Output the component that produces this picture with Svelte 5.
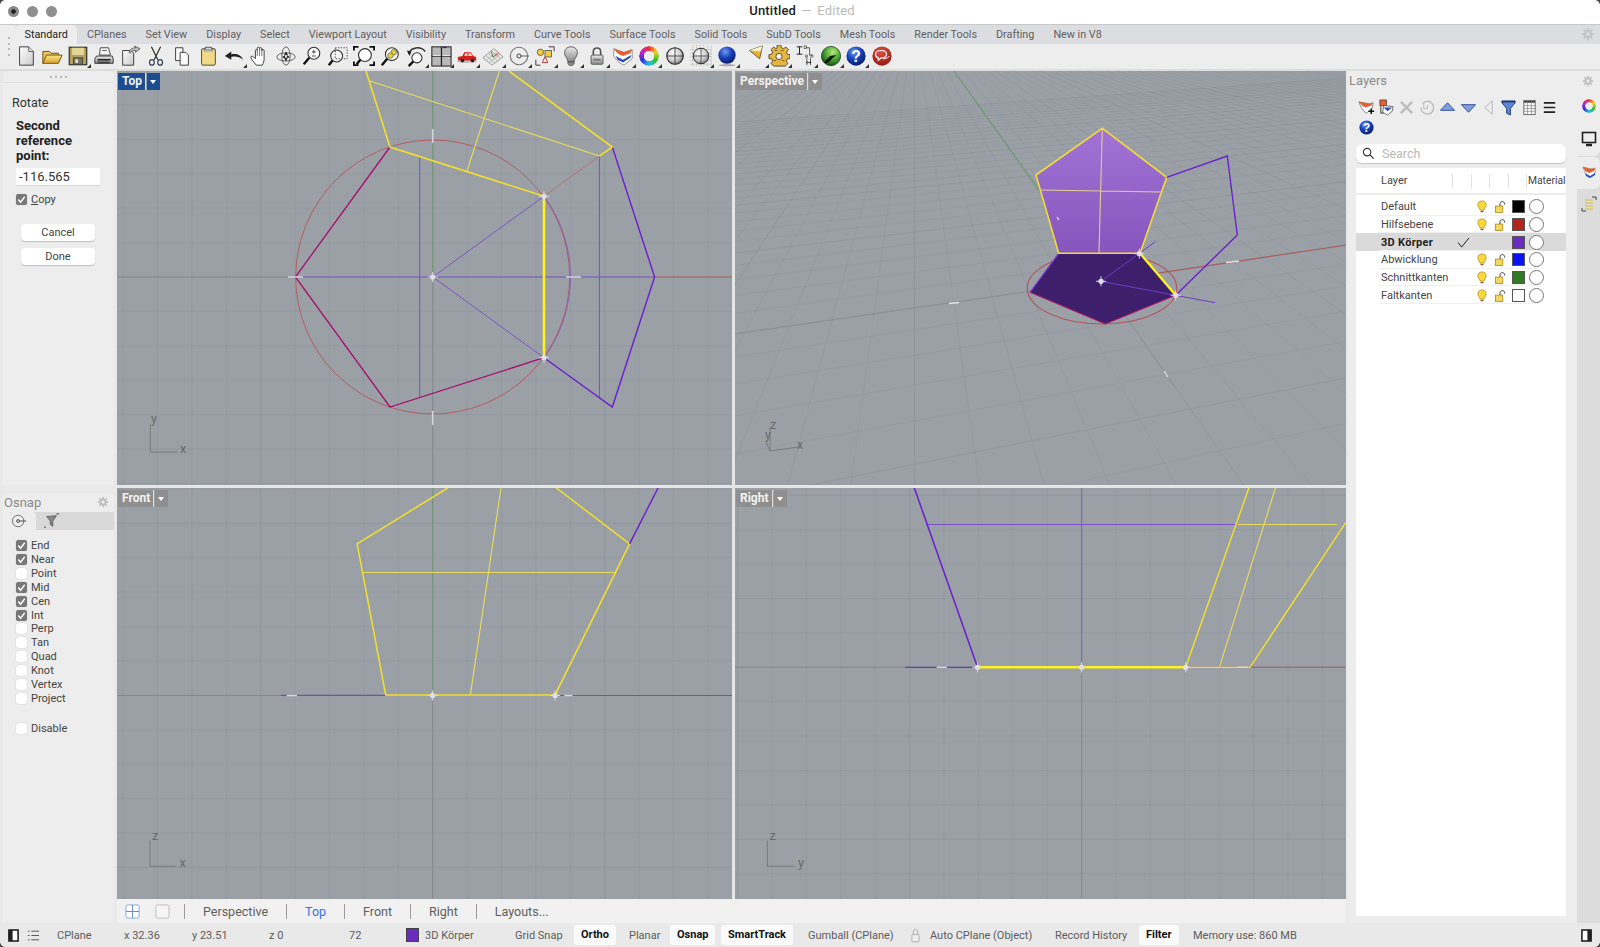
<script>
  const tabs = ['Standard','CPlanes','Set View','Display','Select','Viewport Layout','Visibility','Transform','Curve Tools','Surface Tools','Solid Tools','SubD Tools','Mesh Tools','Render Tools','Drafting','New in V8'];

  const osnaps = [
    ['End', true], ['Near', true], ['Point', false], ['Mid', true], ['Cen', true], ['Int', true],
    ['Perp', false], ['Tan', false], ['Quad', false], ['Knot', false], ['Vertex', false], ['Project', false]
  ];

  const layers = [
    { name: 'Default', color: '#000000' },
    { name: 'Hilfsebene', color: '#b3241c' },
    { name: '3D Körper', color: '#6a2bc0', current: true },
    { name: 'Abwicklung', color: '#0a14f0' },
    { name: 'Schnittkanten', color: '#2f7a22' },
    { name: 'Faltkanten', color: '#ffffff' }
  ];

  const status = [
    { t: 'CPlane', w: 67 }, { t: 'x 32.36', w: 68 }, { t: 'y 23.51', w: 77 }, { t: 'z 0', w: 80 },
    { t: '72', w: 57 }, { t: '3D Körper', w: 109, swatch: true }, { t: 'Grid Snap', w: 59 },
    { t: 'Ortho', w: 55, on: true }, { t: 'Planar', w: 41 }, { t: 'Osnap', w: 51, on: true },
    { t: 'SmartTrack', w: 87, on: true }, { t: 'Gumball (CPlane)', w: 103 }, { t: '', w: 19, lock: true },
    { t: 'Auto CPlane (Object)', w: 125 }, { t: 'Record History', w: 84 }, { t: 'Filter', w: 54, on: true },
    { t: 'Memory use: 860 MB', w: 140 }
  ];

  // flat construction grid around the world origin of a view
  function flatGrid(cx, cy, w, h, step, every) {
    let minor = '';
    let major = '';
    for (let i = -30; i <= 30; i++) {
      const x = cx + i * step;
      const y = cy + i * step;
      const big = i % every === 0;
      if (x >= 0 && x <= w) {
        if (big) major += `M${x} 0V${h}`;
        else minor += `M${x} 0V${h}`;
      }
      if (y >= 0 && y <= h) {
        if (big) major += `M0 ${y}H${w}`;
        else minor += `M0 ${y}H${w}`;
      }
    }
    return { minor, major };
  }

  // ground plane seen through the perspective camera
  function project(X, Y) {
    const q = 1 + 0.01344 * X + 0.0648 * Y;
    return [(366 + (34.8 * X - 12.1 * Y) / q).toFixed(1), (210 + (-5 * X - 17.3 * Y) / q).toFixed(1)];
  }

  function perspGrid() {
    let minor = '';
    let major = '';
    const add = (a, b, big) => {
      const s = `M${a[0]} ${a[1]}L${b[0]} ${b[1]}`;
      if (big) major += s;
      else minor += s;
    };
    for (let X = -60; X <= 60; X++) {
      const y0 = Math.max((0.12 - 1 - 0.01344 * X) / 0.0648, -40);
      add(project(X, y0), project(X, 120), X % 5 === 0);
    }
    for (let Y = -13; Y <= 30; Y++) {
      const x0 = Math.max((0.12 - 1 - 0.0648 * Y) / 0.01344, -70);
      add(project(x0, Y), project(300, Y), Y % 5 === 0);
    }
    return { minor, major };
  }

  const gridTop = flatGrid(315.7, 206, 615, 414, 34.4, 5);
  const gridFront = flatGrid(315.7, 207.4, 615, 411, 34.4, 5);
  const gridRight = flatGrid(346.6, 179.3, 611, 411, 34.4, 5);
  const gridPersp = perspGrid();
</script>

<svg class="defs" width="0" height="0" aria-hidden="true">
  <defs>
    <linearGradient id="paper" x1="0" y1="0" x2="1" y2="1"><stop offset="0" stop-color="#fff"/><stop offset="1" stop-color="#c9c9c9"/></linearGradient>
    <linearGradient id="yel" x1="0" y1="0" x2="0" y2="1"><stop offset="0" stop-color="#fbe58a"/><stop offset="1" stop-color="#d9a32c"/></linearGradient>
    <linearGradient id="steel" x1="0" y1="0" x2="0" y2="1"><stop offset="0" stop-color="#e8e8e8"/><stop offset="1" stop-color="#8a8a8a"/></linearGradient>
    <radialGradient id="ball" cx=".4" cy=".35" r=".7"><stop offset="0" stop-color="#fff"/><stop offset=".6" stop-color="#ccc"/><stop offset="1" stop-color="#777"/></radialGradient>
    <radialGradient id="blueball" cx=".4" cy=".3" r=".75"><stop offset="0" stop-color="#6f9cf0"/><stop offset=".5" stop-color="#1740b8"/><stop offset="1" stop-color="#071a60"/></radialGradient>
    <radialGradient id="greenball" cx=".6" cy=".3" r=".8"><stop offset="0" stop-color="#b9ea7a"/><stop offset=".55" stop-color="#3f9a2a"/><stop offset="1" stop-color="#0c3a12"/></radialGradient>
    <radialGradient id="redball" cx=".45" cy=".3" r=".8"><stop offset="0" stop-color="#e25040"/><stop offset="1" stop-color="#8a120c"/></radialGradient>
    <linearGradient id="facefill" x1="0" y1="0" x2="0" y2="1"><stop offset="0" stop-color="#a274d6"/><stop offset="1" stop-color="#8655bd"/></linearGradient>
    <g id="hnd">
      <path d="M-5 0H5M0 -5V5" stroke="#d8dade" stroke-width="1"/>
      <circle r="2.600" fill="#dfe0e4"/>
    </g>
  </defs>
</svg>

<div class="window">
  <header class="titlebar">
    <div class="lights">
      <span class="light first"></span><span class="light"></span><span class="light"></span>
    </div>
    <div class="doc"><b>Untitled</b> <i>— Edited</i></div>
  </header>

  <nav class="tabrow">
    {#each tabs as tab, i}
      <span class="tab" class:active={i === 0}>{tab}</span>
    {/each}
    <svg class="tab-gear" viewBox="0 0 16 16"><circle cx="8" cy="8" r="3.4" fill="none" stroke="#c4c4c4" stroke-width="2.4"/><path d="M8 1v3M8 12v3M1 8h3M12 8h3M3 3l2 2M11 11l2 2M13 3l-2 2M5 11l-2 2" stroke="#c4c4c4" stroke-width="2"/></svg>
  </nav>

  <div class="toolbar">
    <span class="grabber"><i></i><i></i><i></i><i></i></span>

    <span class="tb"><svg viewBox="0 0 24 24"><path d="M5 2h10l5 5v15H5z" fill="url(#paper)" stroke="#333"/><path d="M15 2v5h5" fill="#eee" stroke="#555"/></svg></span>
    <span class="tb"><svg viewBox="0 0 24 24"><path d="M2 20V7h7l2 2h8v3" fill="#e8c25a" stroke="#6b4b0a"/><path d="M2 20l4-9h17l-4 9z" fill="url(#yel)" stroke="#6b4b0a"/></svg></span>
    <span class="tb fly"><svg viewBox="0 0 24 24"><rect x="2.5" y="2.5" width="19" height="19" fill="#b3a05c" stroke="#3a3a30" stroke-width="1.4"/><rect x="5.5" y="3" width="13" height="8" fill="#e3d596"/><rect x="7" y="14" width="10" height="7" fill="#77775f" stroke="#444"/><rect x="9" y="15.5" width="3" height="4" fill="#ddd"/></svg></span>
    <span class="tb"><svg viewBox="0 0 24 24"><path d="M8 3h9l2 8H7z" fill="#f4f4f4" stroke="#444"/><path d="M4 12h17l1 3v5H2v-5z" fill="url(#steel)" stroke="#333"/><path d="M5 16h14" stroke="#222" stroke-width="1.6"/><rect x="5" y="18" width="13" height="2" fill="#444"/><path d="M10 6h5" stroke="#555"/></svg></span>
    <span class="tb"><svg viewBox="0 0 24 24"><path d="M4 6h9l3 3v13H4z" fill="url(#paper)" stroke="#333"/><path d="M11 8c1-4 4-5 7-5l-1-2 6 3-5 4 0-2c-3 0-5 1-6 3z" fill="#bbb" stroke="#333" stroke-width=".7"/></svg></span>
    <span class="tb"><svg viewBox="0 0 24 24" fill="none"><path d="M7 2l7 14M17 2l-7 14" stroke="#333" stroke-width="1.4"/><ellipse cx="7.5" cy="19" rx="2.6" ry="3" stroke="#345" stroke-width="1.3"/><ellipse cx="16.5" cy="19" rx="2.6" ry="3" stroke="#345" stroke-width="1.3"/></svg></span>
    <span class="tb"><svg viewBox="0 0 24 24"><path d="M5 3h8v14H5z" fill="#fafafa" stroke="#333"/><path d="M10 8h6l3 3v11h-9z" fill="#fafafa" stroke="#333"/></svg></span>
    <span class="tb"><svg viewBox="0 0 24 24"><rect x="5" y="4" width="15" height="18" rx="1.5" fill="#f1d987" stroke="#443"/><path d="M9 5V2.5h7V5z" fill="#fff" stroke="#444"/><path d="M8 4.5h9v2H8z" fill="#ddd" stroke="#555" stroke-width=".6"/></svg></span>
    <span class="tb fly"><svg viewBox="0 0 24 24"><path d="M2 12l7-5v3c6-1 11 1 13 6-4-3-8-4-13-3v3z" fill="#222"/></svg></span>
    <span class="tb"><svg viewBox="0 0 24 24"><path d="M8 22c-2-3-6-6-6-9 0-1 2-1 3 0l2 2V6c0-1.500 2-1.500 2 0V3.500c0-1.500 2.500-1.500 2.500 0V4c0-1.500 2.500-1.500 2.500 0v2c0-1.300 2.500-1.300 2.500 0v9c0 3-1 5-2 7z" fill="#fff" stroke="#333"/><path d="M9 6v6M11.500 4v8M14 4v8" stroke="#333" stroke-width=".7"/></svg></span>
    <span class="tb"><svg viewBox="0 0 24 24" fill="none"><ellipse cx="12" cy="13" rx="10" ry="4.500" stroke="#555"/><ellipse cx="12" cy="12" rx="4.500" ry="10" stroke="#555"/><path d="M12 7l2 4h-4zM12 18l-2-4h4zM8 13l3-2v4zM16 13l-3-2v4z" fill="#222"/></svg></span>
    <span class="tb"><svg viewBox="0 0 24 24" fill="none"><circle cx="14" cy="9" r="6.500" fill="#fff" stroke="#333" stroke-width="1.200"/><path d="M9 14l-6 7" stroke="#111" stroke-width="2.600"/><path d="M14 5.500v4M12 7.500h4M12 12h4" stroke="#333"/></svg></span>
    <span class="tb"><svg viewBox="0 0 24 24" fill="none"><circle cx="10.500" cy="12" r="6.500" fill="#f4f4f4" stroke="#333" stroke-width="1.200"/><path d="M6 17l-4 5" stroke="#111" stroke-width="2.600"/><rect x="9" y="3" width="13" height="12" stroke="#444" stroke-dasharray="1.500 1.500"/></svg></span>
    <span class="tb"><svg viewBox="0 0 24 24" fill="none"><circle cx="13" cy="11" r="7" fill="#fff" stroke="#333" stroke-width="1.200"/><path d="M8 16l-4 5" stroke="#111" stroke-width="2.600"/><path d="M1 6V2h5M18 2h5v4M1 18v4h5M23 18v4h-5" stroke="#111" stroke-width="2"/></svg></span>
    <span class="tb"><svg viewBox="0 0 24 24" fill="none"><circle cx="14" cy="10" r="7" fill="#fff" stroke="#333" stroke-width="1.200"/><circle cx="16" cy="8" r="3" fill="#e8cf30" stroke="#776"/><circle cx="12.500" cy="11.500" r="3" fill="#e8cf30" stroke="#776"/><path d="M9 15l-6 7" stroke="#111" stroke-width="2.600"/></svg></span>
    <span class="tb fly"><svg viewBox="0 0 24 24" fill="none"><circle cx="13" cy="14" r="5.500" fill="#fff" stroke="#333" stroke-width="1.200"/><path d="M9 18l-5 5" stroke="#111" stroke-width="2.600"/><path d="M4 10c2-8 13-9 18-3" stroke="#333" stroke-width="1.600"/><path d="M2 6l5 1-2 5z" fill="#222"/></svg></span>
    <span class="tb fly"><svg viewBox="0 0 24 24"><rect x="2" y="2" width="21" height="21" fill="#b8b8b8" stroke="#333" stroke-width="1.200"/><path d="M12.500 2v21M2 12.500h21" stroke="#222" stroke-width="1.400"/><path d="M3 11h8.500v1.200H3zM13.500 11H22v1.200h-8.500z" fill="#e6e6e6"/><path d="M14 2h4v1.400h-4z" fill="#1a2bb0"/></svg></span>
    <span class="tb fly"><svg viewBox="0 0 24 24"><ellipse cx="12" cy="18" rx="11" ry="1.500" fill="#bbb"/><path d="M2 17v-4l5-1 2-4h7l3 4 3 1v4z" fill="#d3201c"/><path d="M10 9h2.500v3H9zM13.500 9H16l2 3h-4.500z" fill="#f7d4c8"/><circle cx="7" cy="17" r="2" fill="#222"/><circle cx="18" cy="17" r="2" fill="#222"/></svg></span>
    <span class="tb fly"><svg viewBox="0 0 24 24"><path d="M1 14l12-10 10 9-12 9z" fill="#e6e6e6" stroke="#777" stroke-width=".7"/><path d="M4 11.500l10 8M7 9l10 8M10 6.500l10 8M5 16.500l12-9.500M8 19l12-9.500" stroke="#888" stroke-width=".5"/><path d="M12 13l6-4" stroke="#c02020"/><path d="M12 13l-2-6" stroke="#2a9a2a"/></svg></span>
    <span class="tb fly"><svg viewBox="0 0 24 24" fill="none"><circle cx="12" cy="12" r="9.500" stroke="#777" stroke-width="1.200"/><circle cx="12" cy="12" r="2.200" stroke="#333"/><path d="M14 12h9" stroke="#555"/></svg></span>
    <span class="tb fly"><svg viewBox="0 0 24 24"><circle cx="7" cy="8" r="3.500" fill="#f2cc3a" stroke="#665"/><rect x="12" y="6" width="7" height="7" fill="#f2cc3a" stroke="#665"/><path d="M9 19l3-6 3 6z" fill="#fff" stroke="#c02020"/><path d="M16 2h6v5M2 16v6h5" fill="none" stroke="#333"/></svg></span>
    <span class="tb fly"><svg viewBox="0 0 24 24"><path d="M12 2c5 0 7 3.500 7 6.500 0 4-3.500 6-3.500 9.500h-7C8.500 14.500 5 12.500 5 8.500 5 5.500 7 2 12 2z" fill="url(#steel)" stroke="#555"/><path d="M8.500 18.500h7v2l-2 2h-3l-2-2z" fill="#888" stroke="#444" stroke-width=".6"/></svg></span>
    <span class="tb fly"><svg viewBox="0 0 24 24"><path d="M8 11V7c0-5 8-5 8 0v4" fill="none" stroke="#555" stroke-width="1.800"/><rect x="5.500" y="11" width="13" height="10" rx="1" fill="url(#steel)" stroke="#555"/><path d="M8 15h8v2H8z" fill="#777"/></svg></span>
    <span class="tb fly"><svg viewBox="0 0 24 24"><path d="M2 4l11 4 9-3v10l-9 7c-5-2-9-6-11-10z" fill="#fff" stroke="#444" stroke-width=".6"/><path d="M2 4l11 4 9-3-2 4-8 3c-4-1-8-4-10-8z" fill="#e86030"/><path d="M4 12l8 4 9-5-1 3-8 5-6-3z" fill="#2a4ec0"/></svg></span>
    <span class="tb fly"><span class="wheel"></span></span>
    <span class="tb"><svg viewBox="0 0 24 24" fill="none"><circle cx="12" cy="12" r="9" fill="url(#ball)" stroke="#222" stroke-width="1.200"/><path d="M3 12h18M12 3v18" stroke="#333" stroke-width=".9"/></svg></span>
    <span class="tb fly"><svg viewBox="0 0 24 24" fill="none"><path d="M0 5h24M0 9h24M0 13h24M0 17h24M0 21h24M3 0v24M7 0v24M11 0v24M15 0v24M19 0v24M23 0v24" stroke="#777" stroke-width=".5" stroke-dasharray="1 1"/><circle cx="12" cy="12" r="8.500" fill="url(#ball)" stroke="#222"/><path d="M3.500 12h17M12 3.500v17" stroke="#333" stroke-width=".8"/></svg></span>
    <span class="tb fly"><svg viewBox="0 0 24 24"><circle cx="12" cy="11" r="9.500" fill="url(#blueball)"/><ellipse cx="12" cy="22" rx="9" ry="1.200" fill="#aaa"/></svg></span>
    <span class="tb fly cone"><svg viewBox="0 0 24 24"><path d="M5 6l14-5-3 14z" fill="#f2b020" stroke="#554"/><path d="M5 6l14-5-2 6z" fill="#fff3c8"/></svg></span>
    <span class="tb fly gear"><svg viewBox="0 0 24 24"><path d="M10 2h4l.6 3 2.400 1 2.600-1.700 2.800 2.800L20 9.700l1 2.300 3 .6v4l-3 .6-1 2.400 1.700 2.600-2.800 2.800H6.100l-2.800-2.800L5 19.600 4 17.200l-3-.6v-4l3-.6 1-2.300-1.700-2.600 2.800-2.800L8.700 6 10 5.200z" transform="translate(0 -2)" fill="#e3b640" stroke="#54462a"/><circle cx="12" cy="12.500" r="3.400" fill="#f0f0f0" stroke="#54462a"/><path d="M7 6h3M14 6h3M6 17h3M15 17h3" stroke="#8a5a10"/></svg></span>
    <span class="tb fly"><svg viewBox="0 0 24 24" fill="none"><path d="M3 2h6M6 2v8M3 10h6" stroke="#111"/><rect x="11" y="1" width="2.600" height="2.600" stroke="#333" stroke-width=".7"/><path d="M13 3h4v8h3M14 13v9M18 14v8" stroke="#333" stroke-width=".8"/><circle cx="13.500" cy="12" r="1.300" stroke="#333" stroke-width=".7"/><circle cx="19.500" cy="12" r="1.300" stroke="#333" stroke-width=".7"/><path d="M14 19h4M14.500 18l-1 1 1 1M17.500 18l1 1-1 1" stroke="#111" stroke-width=".8"/></svg></span>
    <span class="tb fly"><svg viewBox="0 0 24 24"><circle cx="12" cy="12" r="10.500" fill="url(#greenball)" stroke="#1a3a1a" stroke-width=".8"/><path d="M4 19l7-7 7-1-5 4c-2 3-5 5-7 5z" fill="#0b1a0d"/></svg></span>
    <span class="tb fly"><svg viewBox="0 0 24 24"><circle cx="12" cy="12" r="10.500" fill="url(#blueball)"/><text x="12" y="18" class="qmark">?</text></svg></span>
    <span class="tb"><svg viewBox="0 0 24 24"><circle cx="12" cy="12" r="10.500" fill="url(#redball)"/><path d="M5 10c0-3 3-4 6-4s6 1 6 4-3 4-6 4l-3 2.500V14c-2-.5-3-2-3-4z" fill="none" stroke="#fff" stroke-width="1.300"/><path d="M13 15c3 0 6-1 7-3" fill="none" stroke="#fff"/></svg></span>
  </div>

  <div class="main">
    <aside class="left">
      <section class="command">
        <div class="dots"><i></i><i></i><i></i><i></i></div>
        <div class="cmd-name">Rotate</div>
        <div class="cmd-prompt">Second reference point:</div>
        <input class="cmd-input" value="-116.565" readonly />
        <label class="check-row copy">
          <span class="box on"><svg viewBox="0 0 12 12"><path d="M2.500 6l2.500 3 4.500-6" fill="none" stroke="#fff" stroke-width="1.600"/></svg></span>
          <span><u>C</u>opy</span>
        </label>
        <button class="cmd-btn first">Cancel</button>
        <button class="cmd-btn">Done</button>
      </section>

      <section class="osnap">
        <div class="panel-title">
          <span>Osnap</span>
          <svg class="gear-ico" viewBox="0 0 16 16"><circle cx="8" cy="8" r="3.400" fill="none" stroke="#bdbdbd" stroke-width="2.400"/><path d="M8 1v3M8 12v3M1 8h3M12 8h3M3 3l2 2M11 11l2 2M13 3l-2 2M5 11l-2 2" stroke="#bdbdbd" stroke-width="2"/></svg>
        </div>
        <div class="osnap-tabs">
          <span class="osnap-tab active"><svg viewBox="0 0 18 18" fill="none"><circle cx="8" cy="9" r="6.500" stroke="#666"/><circle cx="8" cy="9" r="1.600" stroke="#333"/><path d="M10 9h7" stroke="#444"/></svg></span>
          <span class="osnap-tab"><svg viewBox="0 0 18 18"><path d="M3 4l11-1-4 6v6l-3-2V9z" fill="#888" stroke="#444" stroke-width=".7"/><path d="M14 1h3M0 16h2" stroke="#333"/></svg></span>
        </div>
        <ul class="osnap-list">
          {#each osnaps as [name, on]}
            <li class="check-row">
              <span class="box" class:on>{#if on}<svg viewBox="0 0 12 12"><path d="M2.500 6l2.500 3 4.500-6" fill="none" stroke="#fff" stroke-width="1.600"/></svg>{/if}</span>
              <span>{name}</span>
            </li>
          {/each}
          <li class="check-row disable">
            <span class="box"></span>
            <span>Disable</span>
          </li>
        </ul>
      </section>
    </aside>

    <div class="center">
      <div class="viewports">
        <div class="vp">
          <svg class="scene">
            <path d={gridTop.minor} class="g-minor"/><path d={gridTop.major} class="g-major"/>
            <path d="M0 206H178" stroke="#868a91"/><path d="M315.700 206V414" stroke="#868a91"/>
            <path d="M315.700 0V206" stroke="#77977c" stroke-width="1.300"/>
            <path d="M537.600 206H615" stroke="#a8605c" stroke-width="1.200"/>
            <circle cx="315.700" cy="206" r="137" fill="none" stroke="#b45c60"/>
            <path d="M427 125A137 137 0 0 1 427 287" fill="none" stroke="#8b62b4"/>
            <path d="M178.400 206H537.600M315.700 206L427 125.300M315.700 206L427 286.700" fill="none" stroke="#7b55c4"/>
            <path d="M302.700 86V326.700M482.400 85V326.700" stroke="#7a50c8"/>
            <path d="M427 125.300L482.400 85" stroke="#a98085" stroke-width="1.200"/>
            <path d="M273 76L178.400 206L273 336L427 286.700" fill="none" stroke="#a60e6a" stroke-width="1.300"/>
            <path d="M495.300 76L537.600 206L495.300 336L427 286.700" fill="none" stroke="#6a1fd0" stroke-width="1.400"/>
            <path d="M253 10L482.400 85M382.400 0L350 100" fill="none" stroke="#e9dc5a" stroke-width="1.100"/>
            <path d="M249 0L273 76L427 125.300M392 0L495.300 76L482.400 85" fill="none" stroke="#f2df2c" stroke-width="1.600"/>
            <path d="M427 125.300V286.700" stroke="#fff21e" stroke-width="2.600"/>
            <path d="M171 206H186M449 206H464M315.700 58V72M315.700 340V354" stroke="#d5d7dc" stroke-width="1.500"/>
            <use href="#hnd" x="315.700" y="206"/><use href="#hnd" x="427" y="125.300"/><use href="#hnd" x="427" y="286.700"/>
            <path d="M33.300 353V381H60.800" fill="none" stroke="#777b80"/>
            <text x="34" y="352" class="axis">y</text><text x="63" y="382" class="axis">x</text>
          </svg>
          <div class="vp-label current"><b>Top</b><span class="vp-arrow"></span></div>
        </div>

        <div class="vp">
          <svg class="scene">
            <path d={gridPersp.minor} class="g-minor"/><path d={gridPersp.major} class="g-major"/>
            <path d="M0 263L366 210M366 210L440 316" stroke="#8c9097" fill="none"/>
            <path d="M219 0L305 120" stroke="#62985e"/>
            <path d="M421.700 202.300L611 174" stroke="#a8605c" stroke-width="1.200"/>
            <ellipse cx="367" cy="217.300" rx="74.700" ry="35.700" fill="none" stroke="#b45458" stroke-width="1.100"/>
            <path d="M295 221.300L323.700 182.300H405L440.700 224.300L370.300 253z" fill="#3e1f6c"/>
            <path d="M295 221.300L370.300 253L440.700 224.300" fill="none" stroke="#b01868" stroke-width="1.100"/>
            <path d="M295 221.300L323.700 182.300" stroke="#7a3be0" stroke-width="1.200"/>
            <path d="M366 210.300L420.300 170.700M366 210.300L480 231.700" stroke="#6d3dc4"/>
            <path d="M301 104L367.300 57.300L431.700 106.300L405 182.300H323.700z" fill="url(#facefill)" stroke="#f0dc38" stroke-width="1.600"/>
            <path d="M305.700 119L426.300 121M367.300 57.300L364 181.700" stroke="#e6cb92" stroke-width="1.100"/>
            <path d="M431.700 106.300L492.300 85L502.300 164L440.700 224.300" fill="none" stroke="#6a22cc" stroke-width="1.400"/>
            <path d="M405 182.300L440.700 224.300" stroke="#fff21e" stroke-width="2.400"/>
            <path d="M491 191.500L504 190M214 232.500L224 231.500M429 300L433 306M322 146L324 149" stroke="#e4e4e8" stroke-width="1.300"/>
            <use href="#hnd" x="366" y="210.300"/><use href="#hnd" x="404.300" y="182.700"/><use href="#hnd" x="440.700" y="224.300"/>
            <path d="M35 380V356M35 380L64 376M35 380L31 371" fill="none" stroke="#777b80"/>
            <text x="35" y="358" class="axis">z</text><text x="30" y="368" class="axis">y</text><text x="62" y="378" class="axis">x</text>
          </svg>
          <div class="vp-label"><b>Perspective</b><span class="vp-arrow"></span></div>
        </div>

        <div class="vp">
          <svg class="scene">
            <path d={gridFront.minor} class="g-minor"/><path d={gridFront.major} class="g-major"/>
            <g transform="translate(-117 -488) scale(1.0204)">
              <path d="M115 681.500H275M424 681.500V881" stroke="#868a91"/>
              <path d="M424 478V681.500" stroke="#77977c" stroke-width="1.200"/>
              <path d="M275 681.500H378" stroke="#7a4fa8" stroke-width="1.200"/>
              <path d="M544 681.500H718" stroke="#6a6474"/>
              <path d="M356 561H604M491 478L461 681" stroke="#e9dc5a" stroke-width="1.100" fill="none"/>
              <path d="M439 478L350 533L378 681H544L617 533L545 478" fill="none" stroke="#f2df2c" stroke-width="1.500"/>
              <path d="M617 533L645 478" stroke="#6a1fd0" stroke-width="1.400"/>
              <path d="M281 681.500H291M553 681.500H561" stroke="#d5d7dc" stroke-width="1.500"/>
              <use href="#hnd" x="424" y="681.500"/><use href="#hnd" x="544" y="681.500"/>
              <path d="M147 824V849H172" fill="none" stroke="#777b80"/>
              <text x="149" y="823" class="axis">z</text><text x="176" y="850" class="axis">x</text>
            </g>
          </svg>
          <div class="vp-label"><b>Front</b><span class="vp-arrow"></span></div>
        </div>

        <div class="vp">
          <svg class="scene">
            <path d={gridRight.minor} class="g-minor"/><path d={gridRight.major} class="g-major"/>
            <g transform="translate(-735 -488) scale(1.0204)">
              <path d="M720 654H887M1060 654V881" stroke="#868a91"/>
              <path d="M1060 478V654" stroke="#7a6db0" stroke-width="1.100"/>
              <path d="M887 654H958" stroke="#6d3ba8" stroke-width="1.400"/>
              <path d="M1162 654H1319" stroke="#a8605c"/>
              <path d="M908 514H1213" stroke="#7a50c8"/>
              <path d="M896 478L958 654" stroke="#6a1fd0" stroke-width="1.500"/>
              <path d="M1213 514H1310M1195 654L1250 478M1162 654H1196" stroke="#e9dc5a" stroke-width="1.100" fill="none"/>
              <path d="M1162 654L1224 478M1196 654H1225L1319 512" fill="none" stroke="#f2df2c" stroke-width="1.400"/>
              <path d="M958 654H1162" stroke="#fff21e" stroke-width="2.400"/>
              <path d="M918 654H928M1213 654H1223" stroke="#d5d7dc" stroke-width="1.500"/>
              <use href="#hnd" x="958" y="654"/><use href="#hnd" x="1060" y="654"/><use href="#hnd" x="1162" y="654"/>
              <path d="M752 824V849H779" fill="none" stroke="#777b80"/>
              <text x="754" y="823" class="axis">z</text><text x="782" y="850" class="axis">y</text>
            </g>
          </svg>
          <div class="vp-label"><b>Right</b><span class="vp-arrow"></span></div>
        </div>
      </div>

      <div class="vp-tabs">
        <svg class="vt-ico" viewBox="0 0 16 16"><rect x="1" y="1" width="14" height="14" rx="1.500" fill="#fff" stroke="#88a6d8"/><path d="M8 1v14M1 8h14" stroke="#5d86cf"/></svg>
        <svg class="vt-ico second" viewBox="0 0 16 16"><rect x="1" y="1" width="14" height="14" rx="1.500" fill="#f6f6f6" stroke="#bbb"/></svg>
        <span class="sep"></span><span>Perspective</span>
        <span class="sep"></span><span class="cur">Top</span>
        <span class="sep"></span><span>Front</span>
        <span class="sep"></span><span>Right</span>
        <span class="sep"></span><span>Layouts...</span>
      </div>
    </div>

    <aside class="right">
      <div class="panel-title layers-title">
        <span>Layers</span>
        <svg class="gear-ico" viewBox="0 0 16 16"><circle cx="8" cy="8" r="3.400" fill="none" stroke="#bdbdbd" stroke-width="2.400"/><path d="M8 1v3M8 12v3M1 8h3M12 8h3M3 3l2 2M11 11l2 2M13 3l-2 2M5 11l-2 2" stroke="#bdbdbd" stroke-width="2"/></svg>
      </div>
      <div class="right-body">
        <div class="layers">
          <div class="layer-tools">
            <span><svg viewBox="0 0 18 18"><path d="M1 3l11 2 4-1-1 6-6 5c-4-2-6-6-8-12z" fill="#fff" stroke="#444" stroke-width=".6"/><path d="M1 3l11 2 4-1-2 3-6 2C5 8 3 6 1 3z" fill="#e86030"/><path d="M11 13h6M14 10v6" stroke="#111" stroke-width="1.600"/></svg></span>
            <span><svg viewBox="0 0 18 18"><rect x="2" y="1" width="7" height="6" fill="#e86030" stroke="#333" stroke-width=".7"/><path d="M6 7l10 1-1 5-5 4-5-3z" fill="#fff" stroke="#333" stroke-width=".7"/><path d="M6 9l9 0-5 4z" fill="#2a4ec0"/><path d="M3 7v8h3" fill="none" stroke="#333"/></svg></span>
            <span><svg viewBox="0 0 18 18"><path d="M3 3l12 12M15 3L3 15" stroke="#bdbdbd" stroke-width="2.600"/></svg></span>
            <span><svg viewBox="0 0 18 18" fill="none"><path d="M4 5c3-4 8-3 10 0 3 4 1 10-4 11-5 0-8-3-8-7" stroke="#bcbcbc" stroke-width="1.400"/><path d="M5 4v6h4V6" stroke="#bcbcbc"/></svg></span>
            <span><svg viewBox="0 0 18 18"><path d="M9 4l7.500 8h-15z" fill="#7f9fe2" stroke="#2c4c94"/></svg></span>
            <span><svg viewBox="0 0 18 18"><path d="M9 14l7.500-8h-15z" fill="#7f9fe2" stroke="#2c4c94"/></svg></span>
            <span><svg viewBox="0 0 18 18"><path d="M5 9l8-7v14z" fill="#eee" stroke="#b5b5b5"/></svg></span>
            <span><svg viewBox="0 0 18 18"><path d="M2 2h14v2l-5 6v7l-4-2v-5L2 4z" fill="#5e86d8" stroke="#20386e"/><path d="M2 3h14" stroke="#20386e" stroke-width="1.400"/></svg></span>
            <span><svg viewBox="0 0 18 18" fill="none"><rect x="3" y="1.500" width="12" height="15" fill="#fff" stroke="#666"/><path d="M3 3h12" stroke="#444" stroke-width="2"/><path d="M3 7h12M3 10h12M3 13h12M7 3v13M11 3v13" stroke="#888" stroke-width=".8"/></svg></span>
            <span><svg viewBox="0 0 18 18"><path d="M3 4h12M3 9h12M3 14h12" stroke="#222" stroke-width="1.800"/></svg></span>
            <span><svg viewBox="0 0 18 18"><circle cx="9" cy="9" r="7.500" fill="url(#blueball)"/><text x="9" y="14" class="qmark small">?</text></svg></span>
          </div>
          <div class="search">
            <svg viewBox="0 0 14 14" fill="none"><circle cx="5.500" cy="5.500" r="4" stroke="#333" stroke-width="1.200"/><path d="M8.500 8.500l4 4" stroke="#333" stroke-width="1.400"/></svg>
            <span>Search</span>
          </div>
          <div class="layer-table">
            <div class="layer-head">
              <span class="h-name">Layer</span>
              <span class="h-col"></span><span class="h-col"></span><span class="h-col"></span><span class="h-col"></span>
              <span class="h-mat">Material</span>
            </div>
            {#each layers as layer}
              <div class="layer-row" class:selected={layer.current}>
                <span class="l-name">{layer.name}</span>
                <span class="l-check">
                  {#if layer.current}<svg viewBox="0 0 14 12"><path d="M1 6l4 5 8-10" fill="none" stroke="#111"/></svg>{/if}
                </span>
                <span class="l-ico">
                  {#if !layer.current}<svg viewBox="0 0 12 14"><path d="M6 1c3 0 4.500 2 4.500 4 0 2.500-2 3.500-2.500 6H4c-.5-2.500-2.500-3.500-2.500-6C1.500 3 3 1 6 1z" fill="#f8d93a" stroke="#a87a10" stroke-width=".7"/><path d="M4.500 12.500h3" stroke="#a0502a" stroke-width="1.400"/></svg>{/if}
                </span>
                <span class="l-ico">
                  {#if !layer.current}<svg viewBox="0 0 12 14"><path d="M6 7V4c0-3 5-3 5 0v1" fill="none" stroke="#333"/><rect x="1" y="6.500" width="8" height="7" fill="#f4d85a" stroke="#a5831c" stroke-width=".8"/></svg>{/if}
                </span>
                <span class="l-color" style="background:{layer.color}"></span>
                <span class="l-mat"></span>
              </div>
            {/each}
          </div>
        </div>
        <div class="strip">
          <div class="strip-tab top">
            <span class="wheel small"></span>
            <svg viewBox="0 0 16 16"><rect x="1.500" y="1.500" width="13" height="10" fill="#eee" stroke="#222" stroke-width="1.600"/><path d="M5 14h6" stroke="#222" stroke-width="2.500"/></svg>
          </div>
          <div class="strip-tab active">
            <svg viewBox="0 0 16 16"><path d="M2 3l8 2 4-1v6l-5 4c-3-2-5-5-7-11z" fill="#fff" stroke="#444" stroke-width=".5"/><path d="M2 3l8 2 4-1-1 3-5 2C5 8 3 6 2 3z" fill="#e86030"/><path d="M4 9l5 3 5-3v2l-5 3-4-2z" fill="#2a4ec0"/></svg>
          </div>
          <div class="strip-tab">
            <svg viewBox="0 0 16 16" fill="none"><path d="M4 4h8M4 7h8M4 10h8M4 13h8" stroke="#d8bb3a" stroke-width="1.200"/><path d="M11 1h4v3M1 12v3h4" stroke="#444"/></svg>
          </div>
        </div>
      </div>
    </aside>
  </div>

  <footer class="statusbar">
    <svg class="st-ico" viewBox="0 0 12 14"><rect x="1" y="1" width="10" height="12" fill="#fff" stroke="#111" stroke-width="1.600"/><rect x="1" y="1" width="4" height="12" fill="#222"/></svg>
    <svg class="st-ico list" viewBox="0 0 14 14"><path d="M1 2h2M5 2h9M1 7h2M5 7h9M1 12h2M5 12h9" stroke="#444"/></svg>
    {#each status as s}
      <span class="st-item" style="width:{s.w}px">
        {#if s.swatch}<i class="st-swatch"></i>{/if}
        {#if s.lock}<svg class="st-lock" viewBox="0 0 10 16" fill="none"><path d="M2.500 7V4c0-3.500 5-3.500 5 0v3" stroke="#aaa"/><rect x="1" y="7" width="8" height="8" rx="1" fill="#eee" stroke="#aaa"/></svg>{/if}
        {#if s.on}<span class="st-on">{s.t}</span>{:else}{s.t}{/if}
      </span>
    {/each}
    <svg class="st-ico end" viewBox="0 0 12 14"><rect x="1" y="1" width="10" height="12" fill="#fff" stroke="#111" stroke-width="1.600"/><rect x="7" y="1" width="4" height="12" fill="#222"/></svg>
  </footer>
</div>

<style>
  :global(body) {
    margin: 0;
    background: #4a4a4a;
    overflow: hidden;
  }

  .defs {
    position: absolute;
  }

  .window {
    width: 1600px;
    height: 947px;
    display: flex;
    flex-direction: column;
    background: #e9e9e9;
    border-radius: 6px;
    overflow: hidden;
    font-family: Roboto, "Liberation Sans", sans-serif;
    font-size: 11px;
    color: #444;
  }

  /* title bar */
  .titlebar {
    height: 24px;
    background: #fff;
    display: flex;
    align-items: center;
    justify-content: center;
    position: relative;
    flex-shrink: 0;
  }

  .lights {
    position: absolute;
    left: 8px;
    top: 6px;
    display: flex;
    gap: 8px;
  }

  .light {
    width: 11px;
    height: 11px;
    border-radius: 50%;
    background: #8f8f8f;
  }

  .light.first {
    background: radial-gradient(circle, #222 0 2px, #8a8a8a 2.500px);
  }

  .doc {
    font-size: 13px;
    color: #bbb;
    letter-spacing: 0.2px;
    margin: -3px 0 0 4px;
  }

  .doc b {
    color: #222;
    font-weight: 500;
  }

  .doc i {
    font-style: normal;
    margin-left: 2px;
    word-spacing: 2px;
  }

  /* tab row and toolbar */
  .tabrow {
    height: 20px;
    background: linear-gradient(90deg, #ededed 0 15px, #dcdde0 15px);
    border-top: 1px solid #c9c9c9;
    display: flex;
    align-items: center;
    padding-left: 15px;
    position: relative;
    flex-shrink: 0;
    box-sizing: border-box;
  }

  .tab {
    height: 100%;
    padding: 0 9.500px;
    display: flex;
    align-items: center;
    color: #5f5f5f;
    font-size: 10.800px;
  }

  .tab.active {
    background: #ededed;
    color: #222;
    border-radius: 5px 5px 0 0;
  }

  .tab-gear {
    position: absolute;
    right: 5px;
    top: 2px;
    width: 14px;
    height: 14px;
  }

  .toolbar {
    height: 27px;
    background: #ededed;
    display: flex;
    align-items: flex-start;
    border-bottom: 2px solid #dcdcdc;
    flex-shrink: 0;
    box-sizing: border-box;
    position: relative;
  }

  .grabber {
    width: 13.500px;
    flex-shrink: 0;
    margin-top: -7px;
    display: flex;
    flex-direction: column;
    align-items: center;
    gap: 3.500px;
    padding-left: 4px;
    box-sizing: border-box;
  }

  .grabber i {
    width: 2px;
    height: 2px;
    border-radius: 50%;
    background: #aaa;
  }

  .tb {
    width: 25.950px;
    height: 24px;
    display: flex;
    align-items: center;
    justify-content: center;
    position: relative;
    flex-shrink: 0;
  }

  .tb svg {
    width: 22px;
    height: 22px;
  }

  .tb.fly::after {
    content: "";
    position: absolute;
    right: 0;
    bottom: 0;
    border-style: solid;
    border-width: 0 0 4px 4px;
    border-color: transparent transparent #333 transparent;
  }

  .tb.cone {
    margin-left: 3px;
  }

  .tb.gear {
    margin-left: -3px;
  }

  .qmark {
    font-family: "Liberation Sans", sans-serif;
    font-size: 17px;
    font-weight: 700;
    fill: #fff;
    text-anchor: middle;
  }

  .qmark.small {
    font-size: 13px;
  }

  .wheel {
    width: 20px;
    height: 20px;
    border-radius: 50%;
    background: conic-gradient(#f03030, #f0d020, #30c030, #20c0e0, #3030e0, #d020c0, #f03030);
    display: block;
    -webkit-mask: radial-gradient(circle, transparent 0 5px, #000 5.500px);
    mask: radial-gradient(circle, transparent 0 5px, #000 5.500px);
  }

  .wheel.small {
    width: 14px;
    height: 14px;
    -webkit-mask: radial-gradient(circle, transparent 0 3.500px, #000 4px);
    mask: radial-gradient(circle, transparent 0 3.500px, #000 4px);
  }

  /* body */
  .main {
    flex: 1;
    min-height: 0;
    display: flex;
  }

  .left {
    width: 117px;
    flex-shrink: 0;
    display: flex;
    flex-direction: column;
    padding-left: 3px;
    box-sizing: border-box;
  }

  .command {
    width: 111px;
    height: 414px;
    background: #ededed;
    border-radius: 5px 5px 0 0;
    box-sizing: border-box;
  }

  .dots {
    height: 11px;
    border-bottom: 1px solid #e0e0e0;
    display: flex;
    justify-content: center;
    align-items: center;
    gap: 3px;
  }

  .dots i {
    width: 2px;
    height: 2px;
    border-radius: 50%;
    background: #aaa;
  }

  .cmd-name {
    margin: 12px 0 0 9px;
    font-size: 12.500px;
    color: #333;
  }

  .cmd-prompt {
    margin: 8px 8px 0 13px;
    font-size: 13px;
    line-height: 15px;
    font-weight: 700;
    color: #222;
  }

  .cmd-input {
    display: block;
    width: 84px;
    height: 18px;
    margin: 5px 0 0 13px;
    padding: 0 3px;
    box-sizing: border-box;
    border: none;
    border-bottom: 1px solid #d4d4d4;
    background: #fff;
    font: 13px Roboto, sans-serif;
    color: #333;
  }

  .cmd-btn {
    display: block;
    width: 74px;
    height: 17px;
    margin: 7px 0 0 18px;
    padding: 0;
    border: none;
    border-radius: 4px;
    background: #fff;
    box-shadow: 0 1px 1px rgba(0, 0, 0, 0.2);
    font: 11px Roboto, sans-serif;
    color: #444;
  }

  .cmd-btn.first {
    margin-top: 17px;
  }

  .check-row {
    display: flex;
    align-items: center;
    gap: 4px;
    height: 13.850px;
    color: #444;
  }

  .check-row.copy {
    margin: 7px 0 0 13px;
  }

  .box {
    width: 11px;
    height: 11px;
    border-radius: 2.500px;
    background: #fff;
    box-shadow: 0 0 1px rgba(0, 0, 0, 0.35);
    display: block;
    flex-shrink: 0;
  }

  .box.on {
    background: #777;
  }

  .box svg {
    display: block;
    width: 11px;
    height: 11px;
  }

  .osnap {
    width: 111px;
    flex: 1;
    margin-top: 8px;
    background: #ededed;
    border-radius: 5px 5px 0 0;
  }

  .panel-title {
    height: 18px;
    display: flex;
    align-items: center;
    justify-content: space-between;
    padding: 0 5px 0 1px;
    font-size: 13px;
    color: #8a8a8a;
  }

  .gear-ico {
    width: 12px;
    height: 12px;
  }

  .osnap-tabs {
    height: 18px;
    margin: 1px 0 0 7px;
    background: #d9d9d9;
    display: flex;
  }

  .osnap-tab {
    width: 26px;
    display: flex;
    align-items: center;
    padding-left: 1px;
    box-sizing: border-box;
    border-radius: 4px 4px 0 0;
  }

  .osnap-tab + .osnap-tab {
    padding-left: 8px;
  }

  .osnap-tab.active {
    background: #ededed;
  }

  .osnap-tab svg {
    width: 16px;
    height: 16px;
  }

  .osnap-list {
    list-style: none;
    margin: 9px 0 0 13px;
    padding: 0;
  }

  .check-row.disable {
    margin-top: 16px;
  }

  /* viewports */
  .center {
    width: 1229px;
    flex-shrink: 0;
    display: flex;
    flex-direction: column;
  }

  .viewports {
    display: grid;
    grid-template-columns: 615px 611px;
    grid-template-rows: 414px 411px;
    gap: 3px;
    background: #e6e6e6;
  }

  .vp {
    position: relative;
    background: #9ba0a7;
    overflow: hidden;
  }

  .scene {
    display: block;
    width: 100%;
    height: 100%;
  }

  .g-minor {
    stroke: rgba(70, 78, 88, 0.07);
    fill: none;
  }

  .g-major {
    stroke: rgba(70, 78, 88, 0.11);
    fill: none;
  }

  .axis {
    font-family: Roboto, sans-serif;
    font-size: 12.500px;
    fill: #666a70;
  }

  .vp-label {
    position: absolute;
    top: 2px;
    left: 1px;
    display: flex;
    height: 17px;
    font-size: 12px;
    color: #f2f2f2;
  }

  .vp-label b {
    padding: 0 3px 0 4px;
    line-height: 17px;
    background: #8f8f8f;
    font-weight: 700;
    border-right: 1.500px solid #dedede;
  }

  .vp-arrow {
    width: 13px;
    margin-left: 1px;
    background: #8f8f8f;
    position: relative;
  }

  .vp-arrow::after {
    content: "";
    position: absolute;
    left: 3px;
    top: 7px;
    border-style: solid;
    border-width: 4px 3.500px 0;
    border-color: #fff transparent transparent;
  }

  .vp-label.current b,
  .vp-label.current .vp-arrow {
    background: #1b4d90;
  }

  .vp-tabs {
    flex: 1;
    background: #f1f1f1;
    display: flex;
    align-items: center;
    gap: 18px;
    padding-left: 8px;
    font-size: 12.500px;
    color: #5e5e5e;
  }

  .vt-ico {
    width: 15px;
    height: 15px;
  }

  .vt-ico.second {
    margin-left: -3px;
    margin-right: -4px;
  }

  .sep {
    width: 1px;
    height: 15px;
    background: #9a9a9a;
  }

  .cur {
    color: #2f74ea;
  }

  /* layers */
  .right {
    flex: 1;
    display: flex;
    flex-direction: column;
    padding-left: 2px;
    min-width: 0;
  }

  .layers-title {
    background: #ededed;
    height: 19px;
    padding-right: 6px;
    border-radius: 4px 0 0 0;
    flex-shrink: 0;
  }

  .right-body {
    flex: 1;
    display: flex;
    min-height: 0;
  }

  .layers {
    width: 229px;
    flex-shrink: 0;
    background: #ededed;
    padding: 0 11px 7px 8px;
    box-sizing: border-box;
    display: flex;
    flex-direction: column;
  }

  .layer-tools {
    display: flex;
    flex-wrap: wrap;
    width: 216px;
    margin: 7px 0 0 0;
  }

  .layer-tools span {
    width: 20.400px;
    height: 20.500px;
    display: flex;
    align-items: center;
    justify-content: center;
  }

  .layer-tools svg {
    width: 17px;
    height: 17px;
  }

  .search {
    height: 19px;
    margin-top: 6px;
    background: #fff;
    border-radius: 6px;
    box-shadow: 0 1px 1px rgba(0, 0, 0, 0.18);
    display: flex;
    align-items: center;
    gap: 7px;
    padding-left: 6px;
    font-size: 12.500px;
    color: #b8b8b8;
  }

  .search svg {
    width: 13px;
    height: 13px;
  }

  .layer-table {
    flex: 1;
    margin-top: 5px;
    background: #fff;
    overflow: hidden;
  }

  .layer-head {
    height: 25px;
    display: flex;
    align-items: center;
    border-bottom: 2px solid #ececec;
    white-space: nowrap;
    color: #444;
  }

  .h-name {
    width: 96px;
    flex-shrink: 0;
    padding-left: 25px;
    box-sizing: border-box;
  }

  .h-col {
    width: 18.500px;
    height: 14px;
    border-left: 1px solid #e2e2e2;
    box-sizing: border-box;
    flex-shrink: 0;
  }

  .h-mat {
    border-left: 1px solid #e2e2e2;
    padding-left: 1px;
    height: 14px;
    line-height: 14px;
    font-size: 10.300px;
  }

  .layer-row {
    height: 17.670px;
    display: flex;
    align-items: center;
    position: relative;
    color: #444;
  }

  .layer-head + .layer-row {
    margin-top: 3px;
  }

  .layer-row::after {
    content: "";
    position: absolute;
    left: 23px;
    right: 28px;
    bottom: 0;
    height: 1px;
    background: #f0f0f0;
  }

  .layer-row.selected {
    background: #dadada;
    font-weight: 700;
    color: #222;
    letter-spacing: 0.300px;
  }

  .l-name {
    width: 96px;
    padding-left: 25px;
    box-sizing: border-box;
    white-space: nowrap;
  }

  .l-check {
    width: 22px;
    display: flex;
    justify-content: center;
  }

  .l-check svg {
    width: 13px;
    height: 11px;
  }

  .l-ico {
    width: 18.500px;
    display: flex;
    justify-content: center;
    margin-left: -1px;
  }

  .l-ico svg {
    width: 12px;
    height: 13px;
  }

  .l-color {
    width: 11px;
    height: 11px;
    margin-left: 3px;
    border: 1px solid #555;
    flex-shrink: 0;
  }

  .l-mat {
    width: 13px;
    height: 13px;
    margin-left: 4px;
    border: 1px solid #777;
    border-radius: 50%;
    background: #fff;
    flex-shrink: 0;
  }

  .strip {
    flex: 1;
    background: #dcdcdc;
    display: flex;
    flex-direction: column;
    gap: 2px;
  }

  .strip-tab {
    display: flex;
    flex-direction: column;
    align-items: center;
    justify-content: center;
    height: 30px;
  }

  .strip-tab.top {
    height: 66px;
    gap: 18px;
    background: #ededed;
    border-radius: 0 0 6px 0;
  }

  .strip-tab.active {
    height: 32px;
    margin-top: -1px;
    background: #ededed;
    border-radius: 0 6px 6px 0;
  }

  .strip-tab.active svg {
    margin-top: -3px;
  }

  .strip-tab:last-child {
    margin-top: -2px;
  }

  .strip-tab svg {
    width: 16px;
    height: 16px;
  }

  /* status bar */
  .statusbar {
    height: 24px;
    flex-shrink: 0;
    background: #e9e9e9;
    display: flex;
    align-items: center;
    position: relative;
    color: #5c5c5c;
  }

  .st-ico {
    width: 11px;
    height: 13px;
    margin-left: 8px;
    flex-shrink: 0;
  }

  .st-ico.list {
    width: 12px;
    margin: 0 18px 0 8px;
  }

  .st-ico.end {
    position: absolute;
    right: 8px;
  }

  .st-item {
    flex-shrink: 0;
    display: flex;
    align-items: center;
    white-space: nowrap;
  }

  .st-swatch {
    width: 13px;
    height: 14px;
    background: #6a2bc0;
    border: 1px solid #444;
    margin-right: 6px;
    box-sizing: border-box;
  }

  .st-lock {
    width: 9px;
    height: 15px;
  }

  .st-on {
    background: #fafafa;
    height: 20px;
    line-height: 20px;
    padding: 0 7px;
    margin-left: 0;
    border-radius: 3px;
    color: #111;
    font-weight: 700;
  }
</style>
